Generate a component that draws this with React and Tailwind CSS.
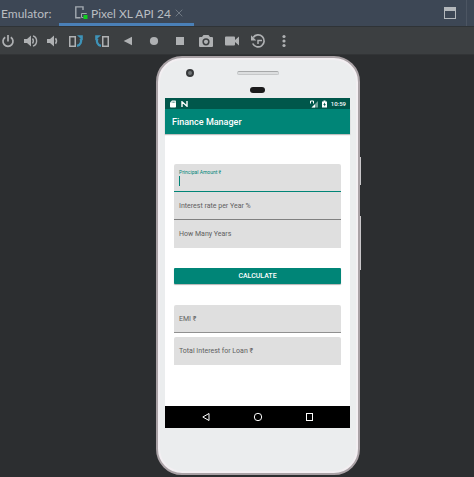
import React from "react";

function ToolButton({ label, children }) {
  return (
    <button type="button" aria-label={label} className="flex h-7 w-4 shrink-0 items-center justify-center text-[#afb1b3]">
      <svg viewBox="0 0 16 16" className="h-4 w-4" fill="currentColor">
        {children}
      </svg>
    </button>
  );
}

function RotateLeft() {
  return (
    <>
      <rect x="1.75" y="3.75" width="5.5" height="9.5" fill="none" stroke="currentColor" strokeWidth="1.5" />
      <path d="M9 12.8C12.8 12 13.8 8.5 12.6 5.5" fill="none" stroke="#3e93b8" strokeWidth="2.2" />
      <path d="M9 2.2H14.8V7.4Z" fill="#3e93b8" />
    </>
  );
}

function Field({ id, label, line, active = false, rounded = "" }) {
  return (
    <div className={`relative h-7 bg-[#dfdfdf] ${line} ${rounded}`}>
      <label
        htmlFor={id}
        className={
          active
            ? "absolute left-[5px] top-[5px] text-[5px] leading-[6px] text-[#008577]"
            : "absolute left-[5px] top-[9px] text-[7px] leading-[10px] text-[#606060]"
        }
      >
        {label}
      </label>
      <input
        id={id}
        type="text"
        className="block h-full w-full bg-transparent px-[5px] pt-2 text-[7px] text-[#333333] outline-none"
      />
      {active && <span className="absolute left-[5px] top-3 h-[10px] w-px bg-[#008577]" />}
    </div>
  );
}

function StatusBar() {
  return (
    <div className="flex h-[11px] items-center bg-[#00574b] pl-[5px] pr-1 text-white">
      <svg viewBox="0 0 6 8" className="h-2 w-[6px]" fill="currentColor">
        <path d="M2 0.5H5.2Q6 0.5 6 1.2V6.8Q6 7.5 5.2 7.5H0.8Q0 7.5 0 6.8V2.5Z" />
        <path d="M2.2 1.5V3M3.5 1.5V3M4.8 1.5V3" stroke="#00574b" strokeWidth="0.5" />
      </svg>
      <svg viewBox="0 0 7 6" className="ml-[5px] h-[6px] w-[7px]" fill="none" stroke="currentColor">
        <path d="M1 6V0.8L6 5.2V0" strokeWidth="1.4" />
      </svg>
      <svg viewBox="0 0 8 8" className="ml-auto h-2 w-2">
        <path d="M8 1V7.5H1.5Z" fill="#6fa39b" />
        <path d="M5 4.2V7.5H1.5Z" fill="white" />
        <path d="M0.5 3.5V1H3.5V3.5" fill="none" stroke="white" />
      </svg>
      <svg viewBox="0 0 5 8" className="ml-1 h-2 w-[5px]">
        <path d="M1.5 0.5H3.5V1.5H5V7.5H0V1.5H1.5Z" fill="white" />
        <path d="M3 2.5L1.2 5H2.3V6.5L4 4.2H3Z" fill="#00574b" />
      </svg>
      <span className="ml-1 text-[6px] font-medium leading-[11px]">10:59</span>
    </div>
  );
}

function PhoneScreen() {
  return (
    <div className="flex h-[330px] flex-col bg-white font-[Roboto,sans-serif]">
      <StatusBar />
      <header className="z-10 flex h-[25px] items-center bg-[#008577] px-[7px] shadow-[0_1px_1px_rgba(0,0,0,0.25)]">
        <h1 className="text-[9px] font-medium leading-3 text-white">Finance Manager</h1>
      </header>
      <main className="flex-1 px-[9px] pt-[30px]">
        <Field id="principal" label="Principal Amount ₹" line="border-b border-b-[#008577]" rounded="rounded-t-[2px]" active />
        <Field id="rate" label="Interest rate per Year %" line="border-b border-b-[#808080]" />
        <Field id="years" label="How Many Years" line="border-b border-b-[#dfdfdf]" />
        <button
          type="button"
          className="mt-5 block h-4 w-full rounded-[1px] bg-[#008577] text-center text-[7px] font-medium leading-4 text-white shadow-[0_1px_1px_rgba(0,0,0,0.3)]"
        >
          CALCULATE
        </button>
        <div className="mt-[21px] flex flex-col gap-1">
          <Field id="emi" label="EMI ₹" line="border-b border-b-[#909090]" rounded="rounded-t-[2px]" />
          <Field id="interest" label="Total Interest for Loan ₹" line="border-b border-b-[#dfdfdf]" rounded="rounded-t-[2px]" />
        </div>
      </main>
      <nav className="flex h-[22px] items-center justify-center gap-10 bg-black text-white">
        <button type="button" aria-label="Back">
          <svg viewBox="0 0 12 12" className="h-3 w-3" fill="none" stroke="currentColor">
            <path d="M9 2.5V9.5L2.8 6Z" />
          </svg>
        </button>
        <button type="button" aria-label="Home">
          <svg viewBox="0 0 12 12" className="h-3 w-3" fill="none" stroke="currentColor">
            <circle cx="6" cy="6" r="3.7" />
          </svg>
        </button>
        <button type="button" aria-label="Recent apps">
          <svg viewBox="0 0 12 12" className="h-3 w-3" fill="none" stroke="currentColor">
            <rect x="2.5" y="2.5" width="6" height="7" />
          </svg>
        </button>
      </nav>
    </div>
  );
}

function Phone() {
  return (
    <div className="relative w-[204px] rounded-[26px] border-2 border-[#aaa2a6] bg-[#ebedee] pb-[45px] pl-[7px] pr-2 shadow-[inset_0_0_0_2px_#f3eff2]">
      <span className="absolute -right-[3px] top-[99px] h-7 w-px bg-[#c9c7c9]" />
      <span className="absolute -right-[3px] top-[158px] h-[54px] w-px bg-[#c9c7c9]" />
      <div className="relative flex h-10 flex-col items-center pt-[13px]">
        <span className="absolute left-[21px] top-[11px] h-2 w-2 rounded-full border-2 border-[#37393b] bg-[#707577]" />
        <span className="h-1 w-[42px] rounded-full border border-[#c6c8c9] border-t-[#a7a9aa] bg-[#dcdedf]" />
        <span className="mt-3 h-[6px] w-[15px] rounded-full bg-[#1b1b1c]" />
      </div>
      <PhoneScreen />
    </div>
  );
}

export default function App() {
  return (
    <div className="min-h-screen bg-[#2c2e30]">
      <header className="flex h-[27px] items-stretch border-b border-[#2f3336] bg-[#3d4755] font-[Lato,sans-serif] text-[12px] text-[#b9bdc1]">
        <span className="w-[59px] pl-px leading-[27px]">Emulator:</span>
        <div className="flex w-[135px] items-center pl-4 shadow-[inset_0_-3px_0_#4a80b8]">
          <svg viewBox="0 0 13 14" className="h-[14px] w-[13px] shrink-0" fill="none" stroke="#a3aab1">
            <path d="M8 4V0.9H0.8V11.8H5.5" strokeWidth="1.4" />
            <path d="M11.5 8V7.5H6.5V11.5H8.5" strokeWidth="1" />
            <rect x="8.5" y="9" width="4" height="4" fill="#10cf20" stroke="none" />
          </svg>
          <span className="ml-[3px] whitespace-nowrap leading-[27px]">Pixel XL API 24</span>
          <button type="button" aria-label="Close tab" className="ml-auto mr-[11px] shrink-0">
            <svg viewBox="0 0 8 8" className="h-2 w-2" fill="none" stroke="#707983">
              <path d="M0.7 0.7L7.3 7.3M7.3 0.7L0.7 7.3" />
            </svg>
          </button>
        </div>
        <button type="button" aria-label="Window view" className="ml-auto flex w-[35px] items-center border-r border-[#4c5562]">
          <svg viewBox="0 0 12 12" className="ml-3 h-3 w-3">
            <rect x="0.5" y="0.5" width="11" height="11" fill="none" stroke="#b4b8bc" />
            <rect width="12" height="4" fill="#b4b8bc" />
          </svg>
        </button>
        <span className="w-[7px]" />
      </header>

      <div className="flex h-7 items-center border-b border-[#323436] bg-[#3c3f41]">
        <div className="flex gap-[7px]">
          <ToolButton label="Power">
            <g fill="none" stroke="currentColor" strokeWidth="1.7">
              <path d="M5.2 4.2A5 5 0 1 0 10.8 4.2" />
              <path d="M8 2V8.5" />
            </g>
          </ToolButton>
          <ToolButton label="Volume up">
            <path d="M1 6H4L8 2.5V13.5L4 10H1Z" />
            <path d="M9.5 5.5Q11.3 8 9.5 10.5M10 2.9C14.8 4.5 14.8 11.5 10 13.1" fill="none" stroke="currentColor" strokeWidth="1.4" />
          </ToolButton>
          <ToolButton label="Volume down">
            <path d="M1 6H4L8 2.5V13.5L4 10H1Z" />
            <path d="M9.5 5.3Q11.5 8 9.5 10.7" fill="none" stroke="currentColor" strokeWidth="1.5" />
          </ToolButton>
        </div>
        <div className="ml-[6px] flex gap-[10px]">
          <ToolButton label="Rotate left">
            <RotateLeft />
          </ToolButton>
          <ToolButton label="Rotate right">
            <g transform="matrix(-1 0 0 1 16 0)">
              <RotateLeft />
            </g>
          </ToolButton>
          <ToolButton label="Back">
            <path d="M12 3.7V12.3L3.7 8Z" />
          </ToolButton>
          <ToolButton label="Home">
            <circle cx="8" cy="8" r="4.1" />
          </ToolButton>
          <ToolButton label="Overview">
            <rect x="4" y="4" width="8" height="8" />
          </ToolButton>
          <ToolButton label="Screenshot">
            <path fillRule="evenodd" d="M5.5 2H10.5L12 4H14Q15 4 15 5V13Q15 14 14 14H2Q1 14 1 13V5Q1 4 2 4H4ZM8 5.2A3.6 3.6 0 1 0 8 12.4A3.6 3.6 0 1 0 8 5.2Z" />
            <circle cx="8" cy="8.8" r="2.1" />
          </ToolButton>
          <ToolButton label="Record">
            <path d="M2 3.5H10Q11 3.5 11 4.5V7L15 3.5V12.5L11 9V11.5Q11 12.5 10 12.5H2Q1 12.5 1 11.5V4.5Q1 3.5 2 3.5Z" />
          </ToolButton>
          <ToolButton label="Snapshots">
            <path d="M3.2 4.5A6 6 0 1 1 2.7 10.5" fill="none" stroke="currentColor" strokeWidth="1.7" />
            <path d="M1 2.2V7.5H6.3Z" />
            <path d="M12 7.6H8V11" fill="none" stroke="currentColor" strokeWidth="1.5" />
          </ToolButton>
          <ToolButton label="More">
            <circle cx="8" cy="3.5" r="1.6" />
            <circle cx="8" cy="8" r="1.6" />
            <circle cx="8" cy="12.5" r="1.6" />
          </ToolButton>
        </div>
      </div>

      <div className="flex justify-center pl-[42px] pt-px">
        <Phone />
      </div>
    </div>
  );
}
